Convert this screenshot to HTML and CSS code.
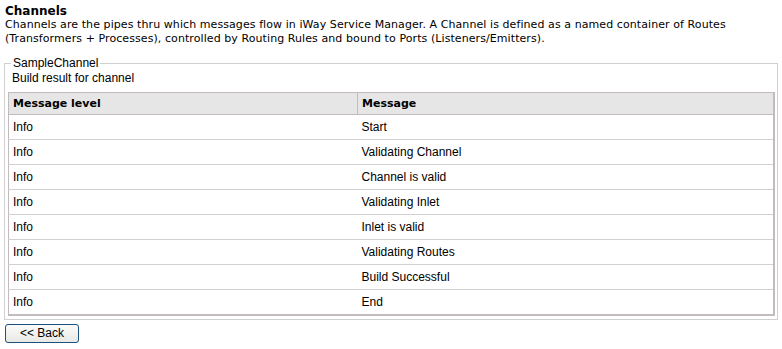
FILE: index.html
```html
<!DOCTYPE html>
<html lang="en">
<head>
    <meta charset="UTF-8">
    <title>Channels</title>
    <link rel="stylesheet" href="styles.css">
</head>
<body>
    <div class="intro">
        <div class="title">Channels</div>
        <p>Channels are the pipes thru which messages flow in iWay Service Manager. A Channel is defined as a named container of Routes (Transformers + Processes), controlled by Routing Rules and bound to Ports (Listeners/Emitters).</p>
    </div>
    <fieldset class="result">
        <legend>SampleChannel</legend>
        <div class="caption">Build result for channel</div>
        <table class="grid">
            <thead>
                <tr>
                    <th class="level">Message level</th>
                    <th>Message</th>
                </tr>
            </thead>
            <tbody>
                <tr><td>Info</td><td>Start</td></tr>
                <tr><td>Info</td><td>Validating Channel</td></tr>
                <tr><td>Info</td><td>Channel is valid</td></tr>
                <tr><td>Info</td><td>Validating Inlet</td></tr>
                <tr><td>Info</td><td>Inlet is valid</td></tr>
                <tr><td>Info</td><td>Validating Routes</td></tr>
                <tr><td>Info</td><td>Build Successful</td></tr>
                <tr><td>Info</td><td>End</td></tr>
            </tbody>
        </table>
    </fieldset>
    <button class="back" type="button">&lt;&lt; Back</button>
</body>
</html>
```

FILE: styles.css
```css
body {
    margin: 0;
    padding: 4px 5px 0 5px;
    background-color: #ffffff;
    color: #000000;
    font-family: "DejaVu Sans", Verdana, sans-serif;
    font-size: 11px;
}
.title {
    font-weight: bold;
    font-size: 12px;
    line-height: 14px;
}
.intro p {
    margin: 0;
    line-height: 14px;
    letter-spacing: 0.08px;
}
.result {
    margin: 10px -1px 0 -1px;
    padding: 0 2px 3px 3px;
    border: 1px solid #d0d0d0;
    font-family: "Liberation Sans", Arial, sans-serif;
    font-size: 12px;
}
.result legend {
    padding: 0 2px;
    margin-left: 3px;
    line-height: 14px;
}
.caption {
    line-height: 14px;
    margin: 1px 0 7px 0;
    padding-left: 4px;
}
.grid {
    width: 100%;
    border-collapse: collapse;
    border: 1px solid #c4bcbc;
    border-bottom: 2px solid #c4bcbc;
    border-right: 2px solid #c4bcbc;
}
.grid th {
    background-color: #e6e6e6;
    font-family: "DejaVu Sans", Verdana, sans-serif;
    font-size: 11px;
    font-weight: bold;
    text-align: left;
    height: 21px;
    padding: 0 4px;
    border-right: 1px solid #c4bcbc;
    border-bottom: 1px solid #c4bcbc;
}
.grid th.level {
    width: 340px;
}
.grid td {
    height: 24px;
    padding: 0 4px;
    border-bottom: 1px solid #d4d0d0;
}
.back {
    margin-top: 4px;
    font-family: "Liberation Sans", Arial, sans-serif;
    font-size: 12px;
    padding: 1px 14px 2px 14px;
    background: linear-gradient(#fbfbfb, #e8e8e4);
    border: 1px solid #1c5180;
    border-radius: 3px;
    color: #000000;
}
```
